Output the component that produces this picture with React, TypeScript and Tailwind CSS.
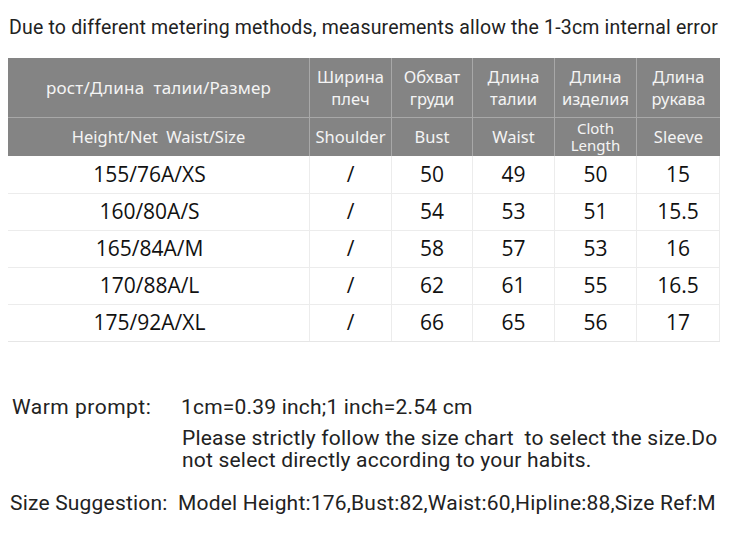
import React from "react";

const rows = [
  ["155/76A/XS", "/", "50", "49", "50", "15"],
  ["160/80A/S", "/", "54", "53", "51", "15.5"],
  ["165/84A/M", "/", "58", "57", "53", "16"],
  ["170/88A/L", "/", "62", "61", "55", "16.5"],
  ["175/92A/XL", "/", "66", "65", "56", "17"],
];

const ruHead = [
  ["Ширина", "плеч"],
  ["Обхват", "груди"],
  ["Длина", "талии"],
  ["Длина", "изделия"],
  ["Длина", "рукава"],
];

const cols = "grid grid-cols-[302px_82px_81px_82px_82px_83px]";

const App: React.FC = () => {
  return (
    <div className="w-[730px] h-[548px] bg-white overflow-hidden font-['Roboto',sans-serif] text-[#222]">
      <p className="pt-[14px] pl-[9px] text-[19.5px] leading-[28px] tracking-[0.18px] whitespace-nowrap">
        Due to different metering methods, measurements allow the 1-3cm internal error
      </p>

      {/* size table */}
      <div className="mt-[16px] ml-[8px] w-[712px] font-['Noto_Sans',sans-serif]">
        <div className="bg-[#848484] text-[#f4f4f4]">
          <div className={`${cols} h-[60px] border-b border-[#a8a8a8]`}>
            <div className="flex items-center justify-center text-[17px] tracking-[0.2px] border-r border-[#a8a8a8]">
              рост/Длина&nbsp; талии/Размер
            </div>
            {ruHead.map((h, i) => (
              <div
                key={i}
                className={`flex flex-col items-center justify-center text-[16.5px] leading-[22px] ${i < 4 ? "border-r border-[#a8a8a8]" : ""}`}
              >
                <span>{h[0]}</span>
                <span>{h[1]}</span>
              </div>
            ))}
          </div>
          <div className={`${cols} h-[38px] text-[16.5px]`}>
            <div className="flex items-center justify-center border-r border-[#a8a8a8]">
              Height/Net&nbsp; Waist/Size
            </div>
            <div className="flex items-center justify-center border-r border-[#a8a8a8]">Shoulder</div>
            <div className="flex items-center justify-center border-r border-[#a8a8a8]">Bust</div>
            <div className="flex items-center justify-center border-r border-[#a8a8a8]">Waist</div>
            <div className="flex flex-col items-center justify-center border-r border-[#a8a8a8] text-[15px] leading-[17px]">
              <span>Cloth</span>
              <span>Length</span>
            </div>
            <div className="flex items-center justify-center">Sleeve</div>
          </div>
        </div>

        <div className="border-b border-[#e6e6e6] text-[21px] text-[#111] font-['Open_Sans',sans-serif]">
          {rows.map((r, ri) => (
            <div
              key={ri}
              className={`${cols} h-[37px] ${ri > 0 ? "border-t border-[#ececec]" : ""}`}
            >
              {r.map((c, ci) => (
                <div
                  key={ci}
                  className={`flex items-center justify-center border-r border-[#ececec] ${ci === 0 ? "pr-[18px]" : ""}`}
                >
                  {c}
                </div>
              ))}
            </div>
          ))}
        </div>
      </div>

      {/* notes */}
      <div className="mt-[54px] text-[21px] leading-[22px] tracking-[0.2px] text-[#222]">
        <div className="flex whitespace-nowrap">
          <span className="w-[181px] pl-[12px] tracking-[0.5px]">Warm prompt:</span>
          <span>1cm=0.39 inch;1 inch=2.54 cm</span>
        </div>
        <p className="mt-[9px] ml-[182px] w-[545px]">
          Please strictly follow the size chart&nbsp; to select the size.Do not select directly according to your habits.
        </p>
        <div className="mt-[21px] flex pl-[10px] whitespace-nowrap">
          <span className="w-[168px]">Size Suggestion:</span>
          <span>Model Height:176,Bust:82,Waist:60,Hipline:88,Size Ref:M</span>
        </div>
      </div>
    </div>
  );
};

export default App;
